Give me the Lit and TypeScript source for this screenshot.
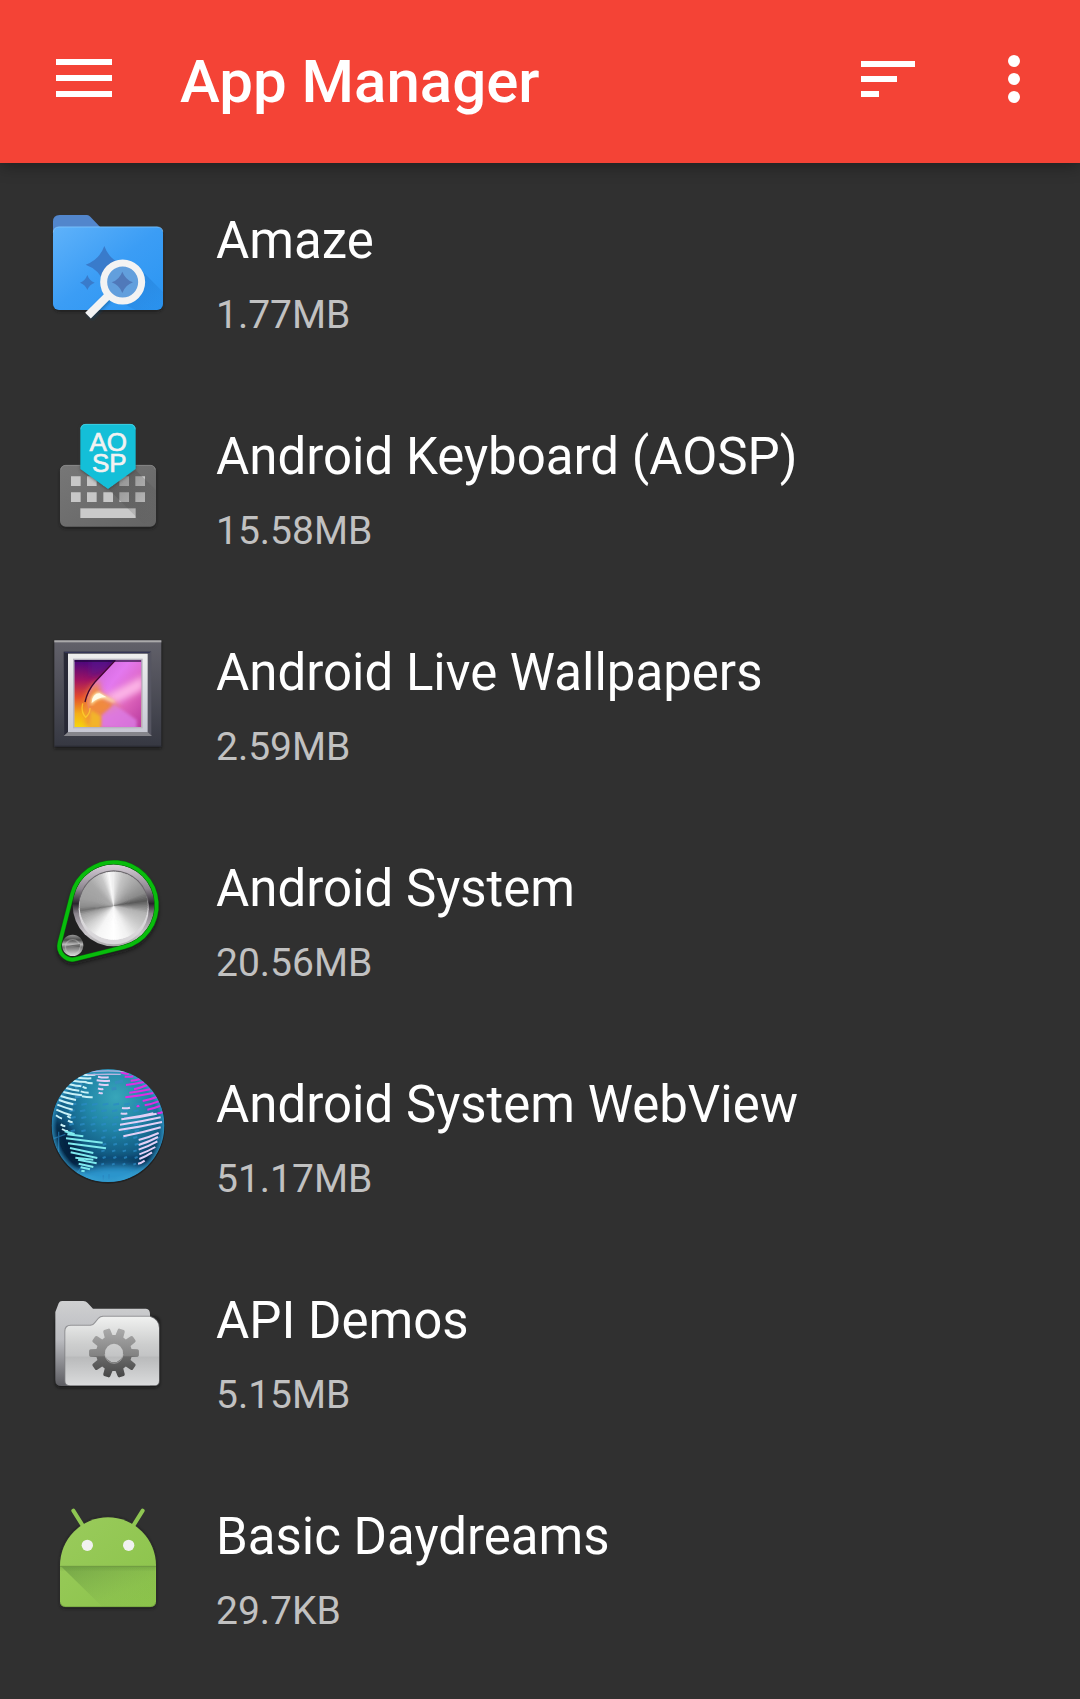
import { LitElement, html, svg, css, type TemplateResult } from "lit";
import { customElement, property } from "lit/decorators.js";

interface AppEntry {
  name: string;
  size: string;
  icon: string;
}

const APPS: AppEntry[] = [
  { name: "Amaze", size: "1.77MB", icon: "folder" },
  { name: "Android Keyboard (AOSP)", size: "15.58MB", icon: "keyboard" },
  { name: "Android Live Wallpapers", size: "2.59MB", icon: "frame" },
  { name: "Android System", size: "20.56MB", icon: "pulley" },
  { name: "Android System WebView", size: "51.17MB", icon: "globe" },
  { name: "API Demos", size: "5.15MB", icon: "gearFolder" },
  { name: "Basic Daydreams", size: "29.7KB", icon: "robot" },
];

const point = (cx: number, cy: number, r: number, deg: number) => {
  const a = (deg * Math.PI) / 180;
  return `${(cx + r * Math.cos(a)).toFixed(1)} ${(cy + r * Math.sin(a)).toFixed(1)}`;
};

/** Brushed-metal shades: [degrees clockwise from the top, grey level]. */
const METAL: [number, number][] = [
  [0, 236], [18, 195], [42, 168], [68, 138], [82, 88], [90, 120], [104, 178],
  [130, 205], [155, 240], [180, 255], [210, 246], [235, 205], [255, 160],
  [263, 112], [269, 140], [285, 160], [315, 168], [338, 200], [352, 250], [360, 236],
];

const shadeAt = (deg: number) => {
  const i = METAL.findIndex(([d]) => d > deg);
  const [d0, v0] = METAL[i - 1];
  const [d1, v1] = METAL[i];
  return Math.round(v0 + ((v1 - v0) * (deg - d0)) / (d1 - d0));
};

const metalDisc = (cx: number, cy: number, r: number, step: number) =>
  Array.from({ length: 360 / step }, (_, i) => {
    const a = i * step;
    const v = shadeAt(a + step / 2);
    return svg`<path fill="rgb(${v},${v},${v})"
      d="M${cx} ${cy}L${point(cx, cy, r, a - 91)}A${r} ${r} 0 0 1 ${point(cx, cy, r, a + step - 89)}Z"/>`;
  });

const gearPath = (cx: number, cy: number) => {
  let d = "";
  for (let i = 0; i < 10; i++) {
    const a = i * 36;
    d += `${i ? "L" : "M"}${point(cx, cy, 54, a - 13)}L${point(cx, cy, 71, a - 9)}`;
    d += `Q${point(cx, cy, 75, a - 8)} ${point(cx, cy, 75, a - 5)}L${point(cx, cy, 75, a + 5)}`;
    d += `Q${point(cx, cy, 75, a + 8)} ${point(cx, cy, 71, a + 9)}L${point(cx, cy, 54, a + 13)}`;
  }
  return `${d}Z M${cx - 27} ${cy}a27 28 0 1 0 54 0a27 28 0 1 0 -54 0Z`;
};

const folder = svg`
  <defs>
    <linearGradient id="body" x1="0" y1="0" x2="1" y2="1">
      <stop offset="0" stop-color="#5fb2fa"/><stop offset=".5" stop-color="#3b9df5"/><stop offset="1" stop-color="#2a95f2"/>
    </linearGradient>
    <linearGradient id="shade" x1="0" y1="0" x2="1" y2="1">
      <stop offset="0" stop-color="#1f78cf" stop-opacity=".7"/><stop offset="1" stop-color="#1f78cf" stop-opacity=".1"/>
    </linearGradient>
    <filter id="soft" x="-20%" y="-20%" width="140%" height="140%"><feGaussianBlur stdDeviation="4"/></filter>
  </defs>
  <rect x="41" y="90" width="327" height="245" rx="18" fill="#161616" opacity=".7" filter="url(#soft)"/>
  <path d="M39 120V65q0-20 20-20h82q6 0 10 5l40 42z" fill="#5286cc"/>
  <rect x="39" y="80" width="330" height="250" rx="18" fill="url(#body)"/>
  <path d="M40 97q1-16 17-16h294q16 0 17 14" fill="none" stroke="#8ac8fc" stroke-width="2"/>
  <path d="M298 205L369 276V312q0 18-18 18H286L210 290z" fill="url(#shade)"/>
  <path d="M193 138q14 41 56 56q-42 15-56 56q-14-41-56-56q42-15 56-56z" fill="#397bcb"/>
  <path d="M142 225q6 17 22 23q-16 6-22 22q-6-16-22-22q16-6 22-23z" fill="#397bcb"/>
  <circle cx="248" cy="246" r="52" fill="#629fdd"/>
  <path d="M247 215q9 24 32 32q-23 8-32 32q-9-24-32-32q23-8 32-32z" fill="#5079ba"/>
  <path d="M205 287L146 347" stroke="#10406f" stroke-opacity=".4" stroke-width="25" transform="translate(2 4)" filter="url(#soft)"/>
  <circle cx="248" cy="246" r="57" fill="none" stroke="#f3f3f3" stroke-width="21"/>
  <path d="M206 285L144 347" stroke="#f3f3f3" stroke-width="24"/>`;

const keyboard = svg`
  <defs>
    <linearGradient id="kb" x1="0" y1="0" x2="1" y2="1"><stop offset="0" stop-color="#777"/><stop offset="1" stop-color="#646464"/></linearGradient>
    <linearGradient id="cast" x1="0" y1="0" x2="1" y2="1"><stop offset="0" stop-color="#444" stop-opacity=".5"/><stop offset="1" stop-color="#555" stop-opacity="0"/></linearGradient>
    <filter id="soft" x="-20%" y="-20%" width="140%" height="140%"><feGaussianBlur stdDeviation="4"/></filter>
  </defs>
  <rect x="60" y="172" width="288" height="184" rx="17" fill="#141414" opacity=".7" filter="url(#soft)"/>
  <rect x="60" y="165" width="288" height="185" rx="17" fill="url(#kb)"/>
  <path d="M62 179q3-13 15-13h254q12 0 15 13" fill="none" stroke="#929292" stroke-width="2"/>
  ${[93, 141, 190, 238, 286].map(
    (x) => svg`<path d="M${x} 199h29v29h-29zM${x} 247h29v29h-29z" fill="#c7c7c7"/>`,
  )}
  <rect x="121" y="295" width="166" height="29" fill="#cacaca"/>
  <path d="M287 180L348 240V330L310 342L204 236z" fill="url(#cast)"/>
  <path d="M121 60q0-18 18-18h130q18 0 18 18V180L204 240L121 180z" fill="#333" opacity=".6" filter="url(#soft)"/>
  <path d="M121 59q0-17 17-17h132q17 0 17 17V177L204 237L121 177z" fill="#14bfd8"/>
  <path d="M122 58q2-15 16-15h132q14 0 16 15" fill="none" stroke="#55d4e6" stroke-width="2"/>
  <g fill="#f2f2f2" font-family="'Liberation Sans', sans-serif" font-size="78" text-anchor="middle" stroke="#f2f2f2" stroke-width="2">
    <text x="205" y="122">AO</text><text x="208" y="187">SP</text>
  </g>`;

const frame = svg`
  <defs>
    <linearGradient id="fr" x2="0" y2="1"><stop offset="0" stop-color="#62616a"/><stop offset="1" stop-color="#363842"/></linearGradient>
    <linearGradient id="mat" x2="0" y2="1"><stop offset="0" stop-color="#eee"/><stop offset="1" stop-color="#c7c8d3"/></linearGradient>
    <linearGradient id="left" x2="0" y2="1"><stop offset="0" stop-color="#46077e"/><stop offset=".3" stop-color="#a01362"/><stop offset=".55" stop-color="#e34a2c"/><stop offset=".8" stop-color="#f4ae18"/><stop offset="1" stop-color="#f6d50c"/></linearGradient>
    <linearGradient id="pink" x1="0" y1="0" x2="1" y2="1"><stop offset="0" stop-color="#c760d0"/><stop offset=".4" stop-color="#e378ef"/><stop offset=".7" stop-color="#dc62ba"/><stop offset="1" stop-color="#b83aa0"/></linearGradient>
    <clipPath id="photo"><rect x="103" y="90" width="201" height="201"/></clipPath>
    <filter id="soft" x="-20%" y="-20%" width="140%" height="140%"><feGaussianBlur stdDeviation="4"/></filter>
    <filter id="wide" x="-40%" y="-40%" width="180%" height="180%"><feGaussianBlur stdDeviation="9"/></filter>
  </defs>
  <rect x="43" y="36" width="321" height="320" fill="#101010" opacity=".7" filter="url(#soft)"/>
  <rect x="43" y="31" width="321" height="320" fill="url(#fr)"/>
  <rect x="43" y="31" width="321" height="6" fill="#aaa9aa"/>
  <rect x="43" y="347" width="321" height="4" fill="#2a2b33"/>
  <path d="M71 65H334L323 71H84V307L73 317z" fill="#282936"/>
  <path d="M71 65H334L329 69H76z" fill="#343557"/>
  <path d="M334 65V317L323 307V71z" fill="#555561"/>
  <path d="M71 318L84 306H323L336 318z" fill="#85858b"/>
  <rect x="84" y="71" width="239" height="235" fill="url(#mat)"/>
  <rect x="99" y="86" width="209" height="209" fill="#b8b5c0"/>
  <g clip-path="url(#photo)">
    <rect x="103" y="90" width="201" height="201" fill="url(#left)"/>
    <path d="M150 80H230L185 130L150 140z" fill="#5a1590" opacity=".6" filter="url(#wide)"/>
    <path d="M226 90H304V291H180L150 250Q130 205 158 165z" fill="url(#pink)"/>
    <path d="M190 200L310 137V178L225 222z" fill="#fcb3e6" filter="url(#wide)"/>
    <path d="M135 216Q140 185 160 165L178 150Q172 190 200 204L240 235L185 258V291H140z" fill="#f08a3c" filter="url(#wide)"/>
    <path d="M184 291V258L222 222L290 270L290 300z" fill="#dc7ee6" opacity=".8" filter="url(#soft)"/>
    <path d="M148 291L152 240L182 258V291z" fill="#f2b42c" filter="url(#soft)"/>
    <path d="M155 221Q154 194 176 188L224 216L190 203Q170 204 155 221z" fill="#fffbd9" stroke="#ffe4a0" stroke-width="5" filter="url(#soft)"/>
    <path d="M155 219Q157 190 179 190L200 202Q175 200 155 219z" fill="#fffce6"/>
    <path d="M128 220Q122 247 137 262Q150 251 150 234" fill="none" stroke="#ffd72d" stroke-width="4" opacity=".7"/>
    <path d="M226 91L165 156Q142 183 135 216" fill="none" stroke="#420731" stroke-width="4"/>
    <path d="M103 93H304" stroke="#1d0832" stroke-opacity=".6" stroke-width="6"/>
  </g>`;

const pulley = svg`
  <defs>
    <linearGradient id="rim" x2="0" y2="1"><stop offset="0" stop-color="#d8d0d9"/><stop offset=".3" stop-color="#8e8790"/><stop offset=".48" stop-color="#29252c"/><stop offset=".6" stop-color="#89838b"/><stop offset=".85" stop-color="#ccc8cd"/><stop offset="1" stop-color="#aaa"/></linearGradient>
    <linearGradient id="small" x2="0" y2="1"><stop offset="0" stop-color="#999"/><stop offset=".25" stop-color="#4a4a4a"/><stop offset=".45" stop-color="#bbb"/><stop offset=".58" stop-color="#777"/><stop offset="1" stop-color="#ddd"/></linearGradient>
    <filter id="soft" x="-20%" y="-20%" width="140%" height="140%"><feGaussianBlur stdDeviation="6"/></filter>
  </defs>
  <path d="M96 134A129 129 0 1 1 252 291L108 327A40 40 0 0 1 59 278Z" fill="#0c0c0c" stroke="#0c0c0c" stroke-width="10" opacity=".65" transform="translate(0 10)" filter="url(#soft)"/>
  <path d="M96 134A129 129 0 1 1 252 291L108 327A40 40 0 0 1 59 278Z" fill="#202020"/>
  <circle cx="221" cy="166" r="123" fill="url(#rim)"/>
  <circle cx="221" cy="166" r="105" fill="#6d6a6e"/>
  <circle cx="221" cy="178" r="105" fill="#d9d7da"/>
  ${metalDisc(221, 167, 102, 3)}
  <circle cx="98" cy="286" r="32" fill="url(#small)"/>
  <circle cx="98" cy="291" r="22" fill="none" stroke="#ccc" stroke-opacity=".4" stroke-width="4"/>
  <path d="M76 290L98 285L120 282V292L98 289z" fill="#555" opacity=".7"/>
  <path d="M96 134A129 129 0 1 1 252 291L108 327A40 40 0 0 1 59 278Z" fill="none" stroke="#0a6e0d" stroke-width="14"/>
  <path d="M96 134A129 129 0 1 1 252 291L108 327A40 40 0 0 1 59 278Z" fill="none" stroke="#08bd0c" stroke-width="11"/>`;

/** Latitude stripes as [x1, y1, x2, y2]. */
const WHITE_STRIPES = [
  [130, 44, 166, 44], [114, 53, 154, 55], [99, 62, 140, 66], [86, 72, 124, 79],
  [78, 84, 118, 92], [70, 96, 126, 106], [62, 108, 108, 120], [57, 120, 100, 133],
  [52, 134, 98, 149], [49, 149, 94, 166], [48, 166, 66, 176],
  [134, 66, 158, 70], [128, 80, 140, 84], [122, 94, 146, 98], [126, 109, 158, 112],
  [82, 168, 92, 173], [84, 182, 98, 187], [62, 193, 76, 199], [66, 207, 84, 214],
];
const LAVENDER_STRIPES = [
  [174, 50, 206, 52], [170, 61, 210, 62], [176, 73, 206, 74], [174, 85, 190, 87], [176, 98, 188, 99],
  [246, 144, 270, 143], [242, 160, 262, 160], [252, 176, 340, 160], [244, 178, 350, 161],
  [240, 194, 362, 172], [236, 210, 366, 186], [250, 229, 362, 202],
  [296, 240, 356, 219], [296, 255, 354, 231], [296, 269, 352, 244], [298, 283, 346, 261],
  [298, 297, 336, 277], [294, 311, 314, 302],
];
const MAGENTA_STRIPES = [
  [242, 37, 266, 42], [254, 50, 280, 49], [272, 62, 300, 57], [258, 75, 312, 66],
  [282, 88, 322, 75], [268, 98, 330, 88], [256, 112, 340, 99], [308, 123, 350, 111],
  [314, 136, 356, 124], [322, 149, 360, 138], [290, 138, 298, 137], [352, 160, 368, 156],
];
const CYAN_STRIPES = [
  [74, 214, 104, 222], [82, 223, 130, 229], [78, 235, 188, 248], [84, 250, 198, 265],
  [90, 264, 160, 279], [92, 277, 172, 294], [106, 293, 160, 299], [114, 299, 170, 310],
  [116, 311, 160, 321], [122, 322, 150, 328], [124, 332, 134, 334],
];

const stripes = (rows: number[][], color: string, bow: number) => svg`
  <path fill="none" stroke=${color} stroke-width="6" d=${rows
    .map(([a, b, c, d]) => `M${a} ${b}Q${(a + c) / 2} ${(b + d) / 2 + bow} ${c} ${d}`)
    .join("")}/>`;

const oceanDashes = () => {
  let d = "";
  for (let row = 0; row < 10; row++) {
    const y = 132 + row * 20;
    for (let col = 0; col < 7; col++) {
      const x = 92 + col * 32 - (row % 2) * 4;
      if (row > 4 && col < 3) continue;
      d += `M${x} ${y + 2}l${17 - row} -3`;
    }
  }
  return d;
};

const globe = svg`
  <defs>
    <radialGradient id="sea" cx=".57" cy=".25" r=".78"><stop offset="0" stop-color="#38a6ba"/><stop offset=".35" stop-color="#2186a8"/><stop offset=".68" stop-color="#105780"/><stop offset="1" stop-color="#041d3b"/></radialGradient>
    <radialGradient id="edge"><stop offset=".9" stop-color="#39a7d8" stop-opacity="0"/><stop offset="1" stop-color="#39a7d8" stop-opacity=".7"/></radialGradient>
    <clipPath id="ball"><circle cx="204" cy="197" r="169"/></clipPath>
    <filter id="soft" x="-30%" y="-30%" width="160%" height="160%"><feGaussianBlur stdDeviation="12"/></filter>
  </defs>
  <circle cx="204" cy="200" r="171" fill="#171717" opacity=".6"/>
  <g clip-path="url(#ball)">
    <rect x="34" y="26" width="340" height="342" fill="url(#sea)"/>
    <path d="M36 190Q70 170 90 220L150 310L310 300L372 210L330 320L200 350L70 300z" fill="#021832" opacity=".75" filter="url(#soft)"/>
    <path d="M90 340Q200 295 330 325L260 380H140z" fill="#2e9bd4" opacity=".95" filter="url(#soft)"/>
    <path d=${oceanDashes()} stroke="#2b8bc4" stroke-width="6" opacity=".75"/>
    <path d="M105 82l22-10M225 68l24-5M215 87l14-2M105 111l16-3" stroke="#368ebd" stroke-width="9"/>
    <path d="M42 235l34-12M56 215v60M108 345l20-30M190 345v18M207 342v16M345 250l14-20" stroke="#2a83bd" stroke-width="4" opacity=".65"/>
    <circle cx="204" cy="197" r="170" fill="url(#edge)"/>
    ${stripes(WHITE_STRIPES, "#c9f1f7", 2)}
    ${stripes(LAVENDER_STRIPES, "#e2d0f7", 3)}
    ${stripes(MAGENTA_STRIPES, "#df2ee2", 2)}
    ${stripes(CYAN_STRIPES, "#7eeaee", 0)}
    <path d="M150 35Q204 30 258 35M142 44Q190 42 242 43" fill="none" stroke="#b7b4df" stroke-width="4"/>
  </g>`;

const gearFolder = svg`
  <defs>
    <linearGradient id="back" x2="0" y2="1"><stop offset="0" stop-color="#cfd0d1"/><stop offset=".45" stop-color="#bbbcc0"/><stop offset="1" stop-color="#5c5c61"/></linearGradient>
    <linearGradient id="front" x2="0" y2="1"><stop offset="0" stop-color="#f0f1f0"/><stop offset=".4" stop-color="#cdcece"/><stop offset=".57" stop-color="#c3c4c5"/><stop offset=".59" stop-color="#b9babb"/><stop offset="1" stop-color="#dadbdc"/></linearGradient>
    <linearGradient id="gear" x2="0" y2="1"><stop offset="0" stop-color="#aaa"/><stop offset=".55" stop-color="#828282"/><stop offset=".58" stop-color="#686868"/><stop offset="1" stop-color="#474747"/></linearGradient>
    <filter id="soft" x="-20%" y="-20%" width="140%" height="140%"><feGaussianBlur stdDeviation="4"/></filter>
  </defs>
  <rect x="46" y="110" width="313" height="214" rx="16" fill="#111" opacity=".65" filter="url(#soft)"/>
  <path d="M46 96L56 70Q59 63 66 63H130Q138 63 143 69L159 86H318Q330 87 330 102V318H64Q46 318 46 300z" fill="url(#back)"/>
  <path d="M73 318V153Q73 134 92 134H150Q158 134 162 128L174 114Q180 107 188 107H331Q359 116 359 143V303Q359 318 343 318H90Q73 318 73 303z" fill="#7d7d80" opacity=".7"/>
  <path d="M76 303V154Q76 137 93 137H152Q160 137 165 130L176 116Q182 110 190 110H330Q357 119 357 144V302Q357 316 342 316H91Q76 316 76 303z" fill="url(#front)"/>
  <path d=${gearPath(222, 219)} fill="url(#gear)" fill-rule="evenodd"/>
  <path d="M195 222a27 28 0 0 0 54 0" fill="none" stroke="#eee" stroke-opacity=".6" stroke-width="2"/>`;

const robot = svg`
  <defs>
    <linearGradient id="body" x1="0" y1="0" x2="1" y2="1"><stop offset="0" stop-color="#9acb5c"/><stop offset="1" stop-color="#8bc34a"/></linearGradient>
    <linearGradient id="fold" x1="0" y1="0" x2="1" y2="1"><stop offset="0" stop-color="#5f8f3c" stop-opacity=".6"/><stop offset=".65" stop-color="#6f9f45" stop-opacity=".1"/><stop offset="1" stop-color="#6f9f45" stop-opacity="0"/></linearGradient>
    <linearGradient id="seam" x2="0" y2="1"><stop offset="0" stop-color="#63933a" stop-opacity=".7"/><stop offset="1" stop-color="#63933a" stop-opacity="0"/></linearGradient>
    <filter id="soft" x="-20%" y="-20%" width="140%" height="140%"><feGaussianBlur stdDeviation="4"/></filter>
  </defs>
  <path d="M60 226A144 144 0 0 1 348 226V338Q348 356 330 356H78Q60 356 60 338z" fill="#141414" opacity=".7" filter="url(#soft)"/>
  <path d="M100 62L130 110M308 62L278 110" stroke="#8fc652" stroke-width="12" stroke-linecap="round"/>
  <path d="M60 226A144 144 0 0 1 348 226V334Q348 351 331 351H77Q60 351 60 334z" fill="url(#body)"/>
  <path d="M63 229H345V350H187z" fill="url(#fold)"/>
  <rect x="60" y="229" width="288" height="16" fill="url(#seam)" opacity=".6"/>
  <path d="M60 229H348" stroke="#6f9b42" stroke-width="3"/>
  <path d="M62 340Q65 350 77 350H331Q343 350 346 340" fill="none" stroke="#6e9c3c" stroke-width="2"/>
  <circle cx="142" cy="166" r="17" fill="#f1f1f1"/><circle cx="266" cy="166" r="17" fill="#f1f1f1"/>`;

const ICONS: Record<string, { view: string; art: TemplateResult<2> }> = {
  folder: { view: "0 0 420 390", art: folder },
  keyboard: { view: "0 18 420 390", art: keyboard },
  frame: { view: "0 6 420 390", art: frame },
  pulley: { view: "0 -6 420 390", art: pulley },
  globe: { view: "0 12 420 390", art: globe },
  gearFolder: { view: "0 0 420 390", art: gearFolder },
  robot: { view: "0 18 420 390", art: robot },
};

@customElement("app-icon")
export class AppIcon extends LitElement {
  static styles = css`
    :host {
      display: block;
      flex: none;
      width: 140px;
      height: 130px;
    }
    .art {
      display: block;
      width: 100%;
      height: 100%;
    }
  `;

  @property() name = "folder";

  render() {
    const { view, art } = ICONS[this.name];
    return html`<svg class="art" viewBox=${view} aria-hidden="true">${art}</svg>`;
  }
}

@customElement("app-row")
export class AppRow extends LitElement {
  static styles = css`
    :host {
      display: block;
    }
    .row {
      display: flex;
      align-items: flex-start;
      gap: 36px;
      box-sizing: border-box;
      width: 100%;
      margin: 0;
      padding: 37px 36px 40px 40px;
      border: 0;
      background: none;
      color: #fff;
      font-family: Roboto, sans-serif;
      text-align: left;
      cursor: pointer;
    }
    .text {
      display: flex;
      flex-direction: column;
      gap: 20px;
      min-width: 0;
      padding-top: 11px;
    }
    .name {
      font-size: 51px;
      line-height: 60px;
    }
    .size {
      color: #c1c1c1;
      font-size: 39px;
      line-height: 48px;
    }
  `;

  @property() name = "";
  @property() size = "";
  @property() icon = "folder";

  render() {
    return html`
      <button class="row" type="button">
        <app-icon name=${this.icon}></app-icon>
        <span class="text">
          <span class="name">${this.name}</span>
          <span class="size">${this.size}</span>
        </span>
      </button>
    `;
  }
}

@customElement("app-root")
export class AppRoot extends LitElement {
  static styles = css`
    :host {
      display: block;
      min-height: 100vh;
      background: #303030;
      font-family: Roboto, sans-serif;
    }
    .bar {
      display: flex;
      align-items: center;
      box-sizing: border-box;
      height: 163px;
      padding: 0 36px 8px 48px;
      background: #f44336;
      color: #fff;
      box-shadow: 0 2px 16px rgba(0, 0, 0, 0.4);
    }
    .title {
      flex: 1;
      margin: 0;
      padding: 8px 0 0 60px;
      font-size: 60px;
      font-weight: 500;
      line-height: 72px;
    }
    .tool {
      display: block;
      width: 72px;
      height: 72px;
      padding: 0;
      border: 0;
      background: none;
      color: inherit;
      cursor: pointer;
    }
    .sort {
      margin-right: 54px;
    }
    .glyph {
      display: block;
      width: 72px;
      height: 72px;
      fill: currentColor;
    }
    .list {
      margin: 0;
      padding: 0;
      list-style: none;
    }
  `;

  render() {
    return html`
      <header class="bar">
        <button class="tool" type="button" aria-label="Open navigation">
          <svg class="glyph" viewBox="0 0 72 72"><path d="M8 17h56v6H8zM8 33h56v6H8zM8 49h56v6H8z"/></svg>
        </button>
        <h1 class="title">App Manager</h1>
        <button class="tool sort" type="button" aria-label="Sort">
          <svg class="glyph" viewBox="0 0 72 72"><path d="M15 19h54v6H15zM15 34h36v6H15zM15 49h18v6H15z"/></svg>
        </button>
        <button class="tool" type="button" aria-label="More options">
          <svg class="glyph" viewBox="0 0 72 72">
            <circle cx="42" cy="19" r="6"/><circle cx="42" cy="37" r="6"/><circle cx="42" cy="55" r="6"/>
          </svg>
        </button>
      </header>
      <main>
        <ul class="list">
          ${APPS.map(
            (app) => html`<li><app-row name=${app.name} size=${app.size} icon=${app.icon}></app-row></li>`,
          )}
        </ul>
      </main>
    `;
  }
}
